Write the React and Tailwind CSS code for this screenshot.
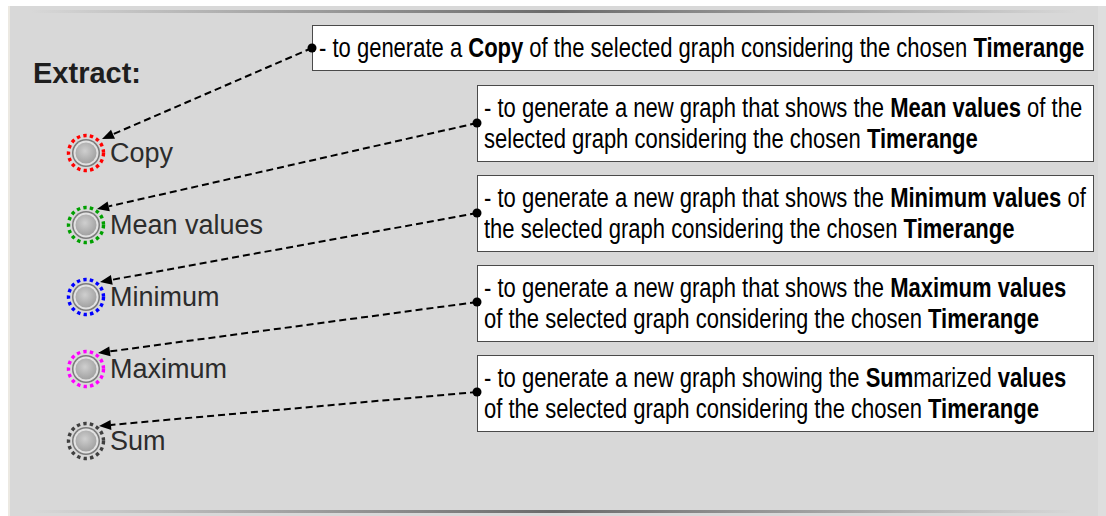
import { useId } from "react";

const options = [
  { label: "Copy", ring: "#ff0000" },
  { label: "Mean values", ring: "#00a000" },
  { label: "Minimum", ring: "#0000ff" },
  { label: "Maximum", ring: "#ff00ff" },
  { label: "Sum", ring: "#404040" },
];

// start = dot on the note box, end = arrow tip at the radio
const arrows = [
  { from: [312, 48], to: [102, 139] },
  { from: [477, 123], to: [97, 209] },
  { from: [477, 213], to: [100, 282] },
  { from: [477, 302], to: [98, 353] },
  { from: [477, 392], to: [99, 426] },
];

function Radio({ ring }) {
  const id = useId();
  return (
    <svg width="40" height="40" viewBox="0 0 40 40" className="shrink-0">
      <defs>
        <radialGradient id={id} cx="45%" cy="40%" r="60%">
          <stop offset="0%" stopColor="#cfcfcf" />
          <stop offset="100%" stopColor="#a2a2a2" />
        </radialGradient>
      </defs>
      <circle cx="20" cy="20" r="17.5" fill="none" stroke={ring} strokeWidth="3.4" strokeDasharray="3.4 3.2" />
      <circle cx="20" cy="20" r="14" fill="#7c7c7c" />
      <circle cx="20" cy="20" r="12.5" fill="#e2e2e2" />
      <circle cx="20" cy="20" r="10.5" fill={`url(#${id})`} />
    </svg>
  );
}

function Arrows() {
  return (
    <svg className="absolute inset-0 pointer-events-none" width="1106" height="516" viewBox="0 0 1106 516">
      {arrows.map((a, i) => {
        const [x1, y1] = a.from;
        const [x2, y2] = a.to;
        const len = Math.hypot(x2 - x1, y2 - y1);
        const ux = (x2 - x1) / len;
        const uy = (y2 - y1) / len;
        const bx = x2 - ux * 12;
        const by = y2 - uy * 12;
        const head = `${x2},${y2} ${bx - uy * 5},${by + ux * 5} ${bx + uy * 5},${by - ux * 5}`;
        return (
          <g key={i}>
            <line x1={x1} y1={y1} x2={bx} y2={by} stroke="#000" strokeWidth="2" strokeDasharray="7 4" />
            <polygon points={head} fill="#000" />
            <circle cx={x1} cy={y1} r="4.5" fill="#000" />
          </g>
        );
      })}
    </svg>
  );
}

// narrow face is not installed, so Liberation Sans is squeezed to Arial Narrow width
function Note({ lines, className }) {
  return (
    <div className={`bg-white border border-[#4a4a4a] pl-[6px] pt-[7px] pb-[6px] leading-[31px] text-[27px] text-black overflow-hidden ${className}`}>
      {lines.map((l, i) => (
        <div key={i} className="whitespace-nowrap origin-left scale-x-[0.815]">
          {l}
        </div>
      ))}
    </div>
  );
}

export default function App() {
  return (
    <div className="relative w-[1106px] h-[516px] bg-white overflow-hidden" style={{ fontFamily: '"Liberation Sans", Arial, sans-serif' }}>
      <div className="absolute left-[8px] top-[6px] w-[1098px] h-[510px] bg-[#d8d8d8] border-l-2 border-[#ece9e2] border-r-[8px] border-r-[#dedede] flex flex-col">
        <div className="mt-[4px] mx-[20px] h-[3px] bg-gradient-to-r from-transparent via-[#6a6a6a] to-transparent" />

        <div className="flex flex-1">
          <div className="w-[302px] pl-[23px]">
            <div className="mt-[46px] text-[29px] leading-[29px] font-bold text-[#1e1e1e]">Extract:</div>
            <div className="mt-[29px] pl-[33px] flex flex-col">
              {options.map((o) => (
                <div key={o.label} className="h-[72px] flex items-center gap-[4px]">
                  <Radio ring={o.ring} />
                  <span className="text-[27px] leading-[27px] text-[#2c2c2c]">{o.label}</span>
                </div>
              ))}
            </div>
          </div>

          <div className="w-[782px] pt-[12px] flex flex-col items-end gap-[13px]">
            <Note
              className="w-full mb-[1px]"
              lines={[
                <>- to generate a <b>Copy</b> of the selected graph considering the chosen <b>Timerange</b></>,
              ]}
            />
            <Note
              className="w-[617px]"
              lines={[
                <>- to generate a new graph that shows the <b>Mean values</b> of the</>,
                <>selected graph considering the chosen <b>Timerange</b></>,
              ]}
            />
            <Note
              className="w-[617px]"
              lines={[
                <>- to generate a new graph that shows the <b>Minimum values</b> of</>,
                <>the selected graph considering the chosen <b>Timerange</b></>,
              ]}
            />
            <Note
              className="w-[617px]"
              lines={[
                <>- to generate a new graph that shows the <b>Maximum values</b></>,
                <>of the selected graph considering the chosen <b>Timerange</b></>,
              ]}
            />
            <Note
              className="w-[617px]"
              lines={[
                <>- to generate a new graph showing the <b>Sum</b>marized <b>values</b></>,
                <>of the selected graph considering the chosen <b>Timerange</b></>,
              ]}
            />
          </div>
        </div>

        <div className="mb-[3px] mx-[20px] h-[3px] bg-gradient-to-r from-transparent via-[#6a6a6a] to-transparent" />
      </div>
      <Arrows />
    </div>
  );
}
